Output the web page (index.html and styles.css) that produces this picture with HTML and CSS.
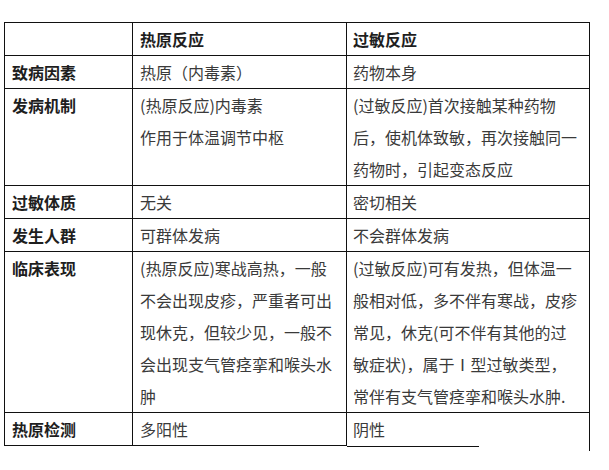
FILE: index.html
```html
<!DOCTYPE html>
<html lang="zh">
<head>
<meta charset="utf-8">
<link rel="stylesheet" href="styles.css">
</head>
<body>
<div class="wrap">
<table class="cmp">
<colgroup><col class="c1"><col class="c2"><col class="c3"></colgroup>
<tr><td class="head"></td><td class="head">热原反应</td><td class="head">过敏反应</td></tr>
<tr><td class="head">致病因素</td><td>热原（内毒素）</td><td>药物本身</td></tr>
<tr><td class="head">发病机制</td><td>(热原反应)内毒素<br>作用于体温调节中枢</td><td>(过敏反应)首次接触某种药物<br>后，使机体致敏，再次接触同一<br>药物时，引起变态反应</td></tr>
<tr><td class="head">过敏体质</td><td>无关</td><td>密切相关</td></tr>
<tr><td class="head">发生人群</td><td>可群体发病</td><td>不会群体发病</td></tr>
<tr><td class="head">临床表现</td><td>(热原反应)寒战高热，一般<br>不会出现皮疹，严重者可出<br>现休克，但较少见，一般不<br>会出现支气管痉挛和喉头水<br>肿</td><td>(过敏反应)可有发热，但体温一<br>般相对低，多不伴有寒战，皮疹<br>常见，休克(可不伴有其他的过<br>敏症状)，属于Ⅰ型过敏类型，<br>常伴有支气管痉挛和喉头水肿.</td></tr>
<tr class="last"><td class="head">热原检测</td><td>多阳性</td><td class="tail">阴性</td></tr>
</table>
</div>
</body>
</html>
```
FILE: styles.css
```css
html, body {
  margin: 0;
  padding: 0;
  background: #fff;
}
body {
  font-family: "Noto Sans CJK SC", "Noto Sans", sans-serif;
  font-size: 16px;
  color: #3a3a3a;
}
.wrap {
  display: inline-block;
  margin: 22px 0 0 4px;
  padding-bottom: 5px;
  border-right: 1px solid #111;
}
.cmp {
  border-collapse: collapse;
  table-layout: fixed;
  width: 584px;
}
.c1 { width: 128px; }
.c2 { width: 214px; }
.c3 { width: 242px; }
.cmp td {
  border: 1px solid #111;
  padding: 0 7px;
  line-height: 32px;
  vertical-align: top;
  white-space: nowrap;
}
.cmp td:last-child {
  border-right: none;
  padding-left: 6px;
}
.cmp td.head {
  font-weight: bold;
  color: #1e1e1e;
}
.last td.tail {
  border-bottom: none;
  position: relative;
}
.last td.tail::after {
  content: "";
  position: absolute;
  left: 0;
  bottom: -1px;
  width: 132px;
  height: 1px;
  background: #111;
}
```
